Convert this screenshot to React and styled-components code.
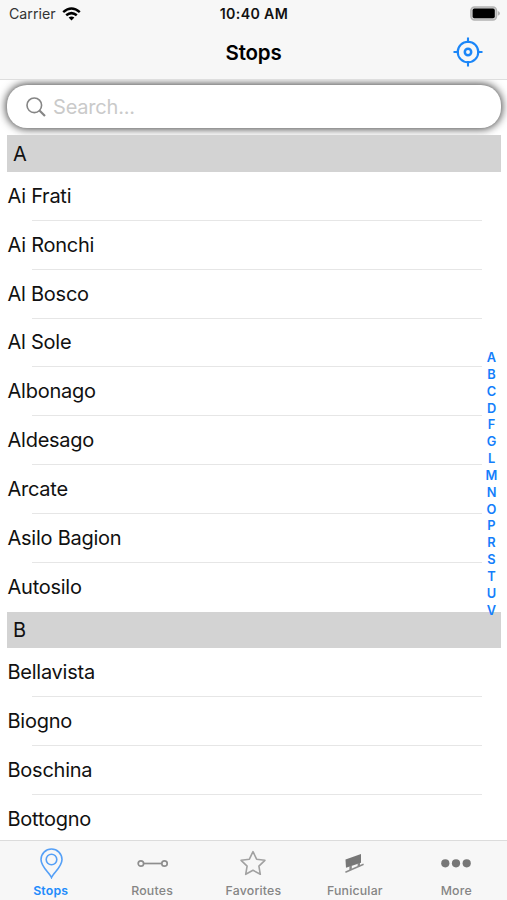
import styled, { createGlobalStyle } from "styled-components";

const GlobalStyle = createGlobalStyle`
  * {
    box-sizing: border-box;
  }

  body {
    margin: 0;
    background: #fff;
    font-family: Inter, 'Liberation Sans', sans-serif;
    color: #111;
  }
`

const Screen = styled.div`
  position: relative;
  width: 507px;
  height: 900px;
  display: flex;
  flex-direction: column;
  overflow: hidden;
  background: #fff;
`

const Header = styled.header`
  position: relative;
  z-index: 1;
  flex: none;
  height: 80px;
  background: #f7f7f7;
  border-bottom: 1px solid #dedede;
`

const StatusBar = styled.div`
  display: grid;
  grid-template-columns: 1fr auto 1fr;
  align-items: center;
  height: 27px;
  padding: 0 7px 0 9px;

  & svg {
    display: block;
  }
`

const Carrier = styled.div`
  display: flex;
  align-items: center;
  gap: 6px;
  font-size: 14.2px;
  color: #333;
`

const Clock = styled.div`
  padding-right: 1px;
  font-size: 14.2px;
  font-weight: 600;
  letter-spacing: 0.35px;
`

const Battery = styled.div`
  justify-self: end;
`

const NavBar = styled.div`
  display: grid;
  grid-template-columns: 1fr auto 1fr;
  align-items: center;
  height: 50px;
  padding: 0 24px;
`

const Title = styled.h1`
  grid-column: 2;
  margin: 0;
  padding-top: 1px;
  font-size: 20.5px;
  font-weight: 600;
  letter-spacing: -0.2px;
  color: #000;
`

const LocateButton = styled.button`
  justify-self: end;
  display: flex;
  padding: 0;
  border: none;
  background: none;
`

const SearchBox = styled.div`
  flex: none;
  display: flex;
  align-items: center;
  gap: 7px;
  height: 43px;
  margin: 5px 6px 7.4px 7px;
  padding-left: 19px;
  border-radius: 20px;
  background: #fff;
  box-shadow: 0 0 9px 1px rgba(0, 0, 0, 0.75);
`

const SearchInput = styled.input`
  flex: 1;
  min-width: 0;
  padding: 0;
  border: none;
  outline: none;
  background: none;
  font: 400 20px Inter, 'Liberation Sans', sans-serif;
  letter-spacing: -0.2px;

  &::placeholder {
    color: #cacaca;
    opacity: 1;
  }
`

const List = styled.main`
  position: relative;
  flex: 1;
  min-height: 0;
  overflow: hidden;
`

const SectionHeader = styled.div`
  display: flex;
  align-items: center;
  height: 36.6px;
  margin: 0 6px 0 7px;
  padding-left: 6px;
  background: #d3d3d3;
  font-size: 20px;
`

const Stop = styled.div`
  display: flex;
  flex-direction: column;
  height: 48.85px;
  padding-left: 7.5px;
  font-size: 20px;
  letter-spacing: -0.25px;

  & span {
    flex: 1;
    display: flex;
    align-items: center;
  }

  &::after {
    content: '';
    height: 1px;
    margin: 0 25px 0 24px;
    background: ${({ $last }) => ($last ? 'transparent' : '#e6e6e6')};
  }
`

const LetterIndex = styled.nav`
  position: absolute;
  top: 350px;
  right: 8.5px;
  width: 14px;
  display: flex;
  flex-direction: column;
  align-items: center;
  font-size: 12.8px;
  font-weight: 600;
  line-height: 16.84px;
  color: #147efb;
`

const TabBar = styled.footer`
  position: relative;
  flex: none;
  display: grid;
  grid-template-columns: repeat(5, 1fr);
  height: 60px;
  border-top: 1px solid #dcdcdc;
  background: #f7f7f7;
`

const Tab = styled.div`
  display: flex;
  flex-direction: column;
  align-items: center;
  color: ${({ $active }) => ($active ? '#218bfc' : '#858585')};
  font-size: 12.3px;
  font-weight: ${({ $active }) => ($active ? 600 : 500)};
  letter-spacing: 0.2px;
  line-height: 15px;

  & svg {
    display: block;
    margin: 6px 0 4px;
  }
`

const sections = [
    {
        letter: 'A',
        stops: ['Ai Frati', 'Ai Ronchi', 'Al Bosco', 'Al Sole', 'Albonago', 'Aldesago', 'Arcate', 'Asilo Bagion', 'Autosilo'],
    },
    {
        letter: 'B',
        stops: ['Bellavista', 'Biogno', 'Boschina', 'Bottogno'],
    },
]

const letters = [...'ABCDFGLMNOPRSTUV']

const WifiIcon = () => (
    <svg width="19" height="14" viewBox="0 0 19 14" fill="none" stroke="#000" strokeWidth="2.5">
        <path d="M1.2 5.1Q9.5 -2 17.8 5.1" />
        <path d="M4.2 8.3Q9.5 3.9 14.8 8.3" />
        <path d="M6.6 10.6Q9.5 8.2 12.4 10.6L9.5 13.4Z" fill="#000" stroke="none" />
    </svg>
)

const BatteryIcon = () => (
    <svg width="30" height="15" viewBox="0 0 30 15">
        <rect x="0.9" y="0.9" width="25.6" height="13" rx="3.6" fill="#d0d0d0" stroke="#b4b4b4" strokeWidth="1.5" />
        <rect x="2.6" y="2.6" width="22.2" height="9.6" rx="1.8" fill="#000" />
        <path d="M27.8 5Q30 6 30 7.4Q30 8.8 27.8 9.8Z" fill="#b4b4b4" />
    </svg>
)

const LocateIcon = () => (
    <svg width="30" height="30" viewBox="0 0 30 30" fill="none" stroke="#1b86f8" strokeWidth="2.1">
        <circle cx="15" cy="15" r="10.3" />
        <circle cx="15" cy="15" r="3.2" strokeWidth="2.5" />
        <path d="M15 0.5V6M15 24V29.5M0.5 15H6M24 15H29.5" />
    </svg>
)

const SearchIcon = () => (
    <svg width="20" height="20" viewBox="0 0 20 20" fill="none" stroke="#858585">
        <circle cx="8.3" cy="8.3" r="7.3" strokeWidth="1.6" />
        <path d="M13.5 13.5L19 19" strokeWidth="2.2" />
    </svg>
)

const PinIcon = () => (
    <svg width="32" height="32" viewBox="0 0 32 32" fill="none" stroke="#55a0f7" strokeWidth="1.6">
        <path d="M16.5 30.5C14.8 26 6 20 6 12.5A10.5 10.5 0 0 1 27 12.5C27 20 18.2 26 16.5 30.5Z" />
        <circle cx="16.5" cy="12.5" r="5.3" />
    </svg>
)

const RouteIcon = () => (
    <svg width="32" height="32" viewBox="0 0 32 32" fill="none" stroke="#8e8e8e" strokeWidth="1.7">
        <circle cx="4.9" cy="16.5" r="2.7" />
        <circle cx="28.5" cy="16.5" r="2.7" />
        <path d="M7.7 16.5H25.7" />
    </svg>
)

const StarIcon = () => (
    <svg width="32" height="32" viewBox="0 0 32 32" fill="none" stroke="#a1a1a1" strokeWidth="1.6" strokeLinejoin="round">
        <path d="M16 4.7L19.6 12.2L27.9 13.3L21.9 19.1L23.3 27.3L16 23.3L8.7 27.3L10.1 19.1L4.1 13.3L12.4 12.2Z" />
    </svg>
)

const FunicularIcon = () => (
    <svg width="32" height="32" viewBox="0 0 32 32">
        <path d="M6.5 12.4L22 7V15.8L7 20.8Z" fill="#777" />
        <path d="M11.6 19V23M19.8 16V19.6" stroke="#888" strokeWidth="2.4" />
        <path d="M6.4 25.3L24.6 17.3" stroke="#8c8c8c" strokeWidth="1.5" />
    </svg>
)

const MoreIcon = () => (
    <svg width="32" height="32" viewBox="0 0 32 32" fill="#777">
        <circle cx="5.3" cy="16.3" r="4.1" />
        <circle cx="16" cy="16.3" r="4.1" />
        <circle cx="26.7" cy="16.3" r="4.1" />
    </svg>
)

const tabs = [
    { label: 'Stops', Icon: PinIcon },
    { label: 'Routes', Icon: RouteIcon },
    { label: 'Favorites', Icon: StarIcon },
    { label: 'Funicular', Icon: FunicularIcon },
    { label: 'More', Icon: MoreIcon },
]

export default function App() {
    return (
        <Screen>
            <GlobalStyle />
            <Header>
                <StatusBar>
                    <Carrier>Carrier <WifiIcon /></Carrier>
                    <Clock>10:40 AM</Clock>
                    <Battery><BatteryIcon /></Battery>
                </StatusBar>
                <NavBar>
                    <Title>Stops</Title>
                    <LocateButton aria-label="Locate">
                        <LocateIcon />
                    </LocateButton>
                </NavBar>
            </Header>
            <SearchBox>
                <SearchIcon />
                <SearchInput placeholder="Search..." />
            </SearchBox>
            <List>
                {sections.map(({ letter, stops }) => (
                    <section key={letter}>
                        <SectionHeader>{letter}</SectionHeader>
                        {stops.map((stop, i) => (
                            <Stop key={stop} $last={letter === 'A' && i === stops.length - 1}>
                                <span>{stop}</span>
                            </Stop>
                        ))}
                    </section>
                ))}
            </List>
            <LetterIndex>
                {letters.map((letter) => <span key={letter}>{letter}</span>)}
            </LetterIndex>
            <TabBar>
                {tabs.map(({ label, Icon }, i) => (
                    <Tab key={label} $active={i === 0}>
                        <Icon />
                        {label}
                    </Tab>
                ))}
            </TabBar>
        </Screen>
    )
}
